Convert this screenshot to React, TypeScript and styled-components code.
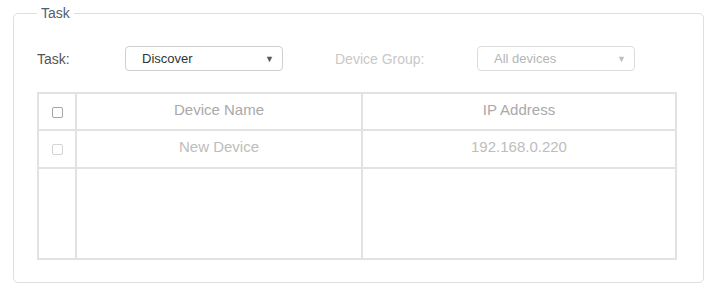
import React from "react";
import styled, { createGlobalStyle } from "styled-components";

const GlobalStyle = createGlobalStyle`
  body {
    margin: 0;
    background: #fff;
    font-family: "Liberation Sans", Arial, sans-serif;
  }
`;

const Page = styled.div`
  padding: 4px 7px 8px 13px;
`;

const Panel = styled.fieldset`
  box-sizing: border-box;
  width: 691px;
  height: 279px;
  margin: 0;
  padding: 0 0 0 23px;
  border: 1px solid #dedede;
  border-radius: 5px;
`;

const Legend = styled.legend`
  padding: 0 4px;
  font-size: 14px;
  line-height: 18px;
  color: #4c6074;
`;

const FormRow = styled.div`
  display: flex;
  align-items: center;
  height: 25px;
  margin-top: 24px;
`;

const Label = styled.span<{ $width: number; $disabled?: boolean }>`
  width: ${(p) => p.$width}px;
  font-size: 14px;
  color: ${(p) => (p.$disabled ? "#c8c8c8" : "#555")};
`;

const Select = styled.div<{ $disabled?: boolean }>`
  box-sizing: border-box;
  display: flex;
  align-items: center;
  justify-content: space-between;
  width: 158px;
  height: 25px;
  padding: 0 8px 0 16px;
  border: 1px solid ${(p) => (p.$disabled ? "#dcdcdc" : "#cfcfcf")};
  border-radius: 4px;
  font-size: 13px;
  color: ${(p) => (p.$disabled ? "#b5b5b5" : "#333")};
`;

const Arrow = styled.span<{ $disabled?: boolean }>`
  font-size: 9px;
  color: ${(p) => (p.$disabled ? "#c0c0c0" : "#555")};
`;

const Spacer = styled.div<{ $width: number }>`
  width: ${(p) => p.$width}px;
`;

const Table = styled.table`
  width: 640px;
  margin-top: 21px;
  border-collapse: collapse;
  table-layout: fixed;
  border-left: 1px solid #d4d4d4;
  border-top: 1px solid #d4d4d4;
  border-right: 2px solid #cdcdcd;
  border-bottom: 2px solid #cdcdcd;
`;

const Cell = styled.td<{ $height: number; $light?: boolean }>`
  height: ${(p) => p.$height}px;
  padding: 0 0 4px;
  border: 2px solid #e2e2e2;
  text-align: center;
  font-size: 15px;
  line-height: 18px;
  color: ${(p) => (p.$light ? "#bdbdbd" : "#a9a9a9")};
  vertical-align: middle;
`;

const Check = styled.span<{ $light?: boolean }>`
  display: inline-block;
  box-sizing: border-box;
  width: 11px;
  height: 11px;
  margin-top: 3px;
  border: 1.5px solid ${(p) => (p.$light ? "#d4d4d4" : "#a5a5a5")};
  border-radius: 2px;
  vertical-align: middle;
`;

export default function App() {
  return (
    <Page>
      <GlobalStyle />
      <Panel>
        <Legend>Task</Legend>
        <FormRow>
          <Label $width={88}>Task:</Label>
          <Select>
            Discover
            <Arrow>▼</Arrow>
          </Select>
          <Spacer $width={52} />
          <Label $width={142} $disabled>
            Device Group:
          </Label>
          <Select $disabled>
            All devices
            <Arrow $disabled>▼</Arrow>
          </Select>
        </FormRow>
        <Table>
          <colgroup>
            <col style={{ width: 38 }} />
            <col style={{ width: 286 }} />
            <col />
          </colgroup>
          <tbody>
            <tr>
              <Cell $height={31}>
                <Check />
              </Cell>
              <Cell $height={31}>Device Name</Cell>
              <Cell $height={31}>IP Address</Cell>
            </tr>
            <tr>
              <Cell $height={32} $light>
                <Check $light />
              </Cell>
              <Cell $height={32} $light>
                New Device
              </Cell>
              <Cell $height={32} $light>
                192.168.0.220
              </Cell>
            </tr>
            <tr>
              <Cell $height={85} />
              <Cell $height={85} />
              <Cell $height={85} />
            </tr>
          </tbody>
        </Table>
      </Panel>
    </Page>
  );
}
